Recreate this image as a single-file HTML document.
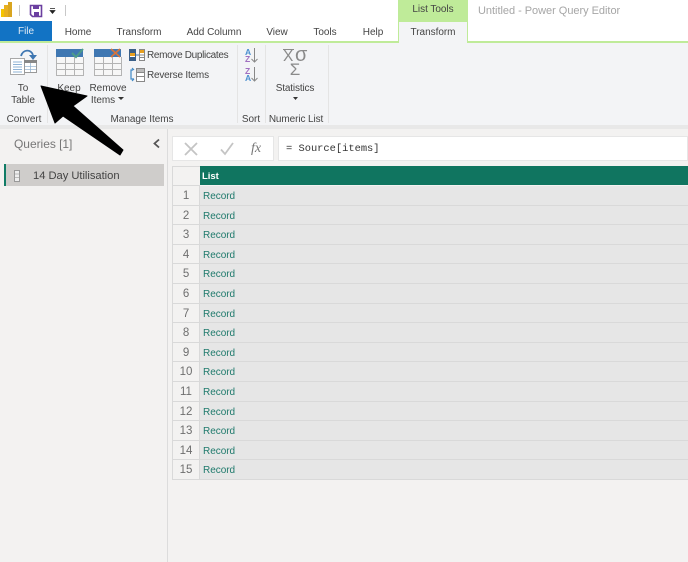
<!DOCTYPE html>
<html><head><meta charset="utf-8">
<style>
html,body{margin:0;padding:0}
body{width:688px;height:562px;position:relative;overflow:hidden;background:#f3f2f1;font-family:"Liberation Sans",sans-serif;font-size:10px;color:#444;letter-spacing:-.03px}
div{position:absolute;box-sizing:border-box}
.t{white-space:nowrap;line-height:12px;text-align:center;transform:translateX(-50%)}
.l{white-space:nowrap;line-height:12px}
.row{left:172px;width:516px;height:19.6px;border-bottom:1px solid #d9d9d9;background:#e6e6e6}
.n{left:0;top:0;width:28px;height:100%;background:#f3f2f1;border-left:1px solid #d9d9d9;border-right:1px solid #d9d9d9;text-align:center;font-size:11.5px;line-height:21px;color:#6e6e6e}
.r{left:31px;top:0;font-size:10px;line-height:21px;color:#1f7a6c;white-space:nowrap}
svg{position:absolute}
</style></head><body>
<div style="left:0;top:0;width:688px;height:42px;background:#fff"></div>
<div style="left:398px;top:0;width:70px;height:21px;background:#bfeb99"></div>
<div class="t" style="left:433px;top:4px;color:#444">List Tools</div>
<div class="l" style="left:478px;top:5px;font-size:11px;color:#a6a6a6">Untitled - Power Query Editor</div>
<div style="left:0;top:21px;width:52px;height:20px;background:#1273c4;color:#dfe9f3;text-align:center;line-height:22px;font-size:10px">File</div>
<div style="left:0;top:41px;width:688px;height:2px;background:#bfeb99"></div>
<div style="left:398px;top:21px;width:70px;height:22px;background:#f3f4f6;border:1px solid #bfeb99;border-bottom:0"></div>
<div class="t" style="left:78px;top:27px">Home</div>
<div class="t" style="left:139px;top:27px">Transform</div>
<div class="t" style="left:214px;top:27px">Add Column</div>
<div class="t" style="left:277px;top:27px">View</div>
<div class="t" style="left:325px;top:27px">Tools</div>
<div class="t" style="left:373px;top:27px">Help</div>
<div class="t" style="left:433px;top:27px">Transform</div>
<!-- ribbon -->
<div style="left:0;top:43px;width:688px;height:82px;background:#f3f4f6"></div>
<div style="left:0;top:125px;width:688px;height:4px;background:#e8e8e8"></div>
<div style="left:47px;top:45px;width:1px;height:78px;background:#e4e4e4"></div>
<div style="left:237px;top:45px;width:1px;height:78px;background:#e4e4e4"></div>
<div style="left:265px;top:45px;width:1px;height:78px;background:#e4e4e4"></div>
<div style="left:328px;top:45px;width:1px;height:78px;background:#e4e4e4"></div>
<div class="t" style="left:23px;top:83px">To</div>
<div class="t" style="left:23px;top:95px">Table</div>
<div class="t" style="left:24px;top:114px">Convert</div>
<div class="t" style="left:69px;top:83px">Keep</div>
<div class="t" style="left:108px;top:83px">Remove</div>
<div class="t" style="left:103px;top:95px">Items</div>
<div class="t" style="left:142px;top:114px">Manage Items</div>
<div class="l" style="left:147px;top:50px;letter-spacing:-.32px">Remove Duplicates</div>
<div class="l" style="left:147px;top:70px;letter-spacing:-.2px">Reverse Items</div>
<div class="t" style="left:251px;top:114px">Sort</div>
<div class="t" style="left:295px;top:83px;letter-spacing:-.15px">Statistics</div>
<div class="t" style="left:296px;top:114px;letter-spacing:-.1px">Numeric List</div>
<div class="l" style="left:283px;top:47px;font-size:15.500px;line-height:20px;color:#8a8a8a">X</div>
<div class="l" style="left:295px;top:45px;font-size:20px;line-height:20px;color:#8a8a8a">σ</div>
<div class="t" style="left:295px;top:60px;font-size:17px;line-height:20px;color:#8a8a8a">Σ</div>
<div class="l" style="left:245px;top:48px;font-size:8.500px;line-height:8px;color:#4a8fd0;font-weight:bold">A</div>
<div class="l" style="left:245px;top:55px;font-size:8.500px;line-height:8px;color:#a070c0;font-weight:bold">Z</div>
<div class="l" style="left:245px;top:67px;font-size:8.500px;line-height:8px;color:#a070c0;font-weight:bold">Z</div>
<div class="l" style="left:245px;top:74px;font-size:8.500px;line-height:8px;color:#4a8fd0;font-weight:bold">A</div>
<!-- panes -->
<div style="left:167px;top:129px;width:1px;height:433px;background:#dcdcdc"></div>
<div class="l" style="left:14px;top:136px;font-size:12px;line-height:16px;color:#777">Queries [1]</div>
<div style="left:4px;top:164px;width:160px;height:22px;background:#cfcdcb;border-left:2px solid #107c66"></div>
<div class="l" style="left:33px;top:169px;font-size:11.200px;line-height:15px;color:#444">14 Day Utilisation</div>
<!-- formula -->
<div style="left:172px;top:136px;width:102px;height:25px;background:#fff;border:1px solid #e6e6e6"></div>
<div style="left:278px;top:136px;width:410px;height:25px;background:#fff;border:1px solid #e6e6e6"></div>
<div class="l" style="left:286px;top:143px;font-family:'Liberation Mono',monospace;font-size:10.400px;color:#333;letter-spacing:0">= Source[items]</div>
<div class="l" style="left:251px;top:141px;font-family:'Liberation Serif',serif;font-style:italic;font-size:14px;line-height:15px;color:#777">fx</div>
<!-- table -->
<div style="left:172px;top:166px;width:28px;height:20px;background:#f3f2f1;border:1px solid #d9d9d9;border-right:0"></div>
<div style="left:200px;top:166px;width:488px;height:19px;background:#107560;color:#fff;font-weight:bold;font-size:9.500px;line-height:21px;padding-left:2px">List</div>
<div class="row" style="top:186px"><div class="n">1</div><div class="r">Record</div></div>
<div class="row" style="top:205.6px"><div class="n">2</div><div class="r">Record</div></div>
<div class="row" style="top:225.2px"><div class="n">3</div><div class="r">Record</div></div>
<div class="row" style="top:244.8px"><div class="n">4</div><div class="r">Record</div></div>
<div class="row" style="top:264.4px"><div class="n">5</div><div class="r">Record</div></div>
<div class="row" style="top:284px"><div class="n">6</div><div class="r">Record</div></div>
<div class="row" style="top:303.6px"><div class="n">7</div><div class="r">Record</div></div>
<div class="row" style="top:323.2px"><div class="n">8</div><div class="r">Record</div></div>
<div class="row" style="top:342.8px"><div class="n">9</div><div class="r">Record</div></div>
<div class="row" style="top:362.4px"><div class="n">10</div><div class="r">Record</div></div>
<div class="row" style="top:382px"><div class="n">11</div><div class="r">Record</div></div>
<div class="row" style="top:401.6px"><div class="n">12</div><div class="r">Record</div></div>
<div class="row" style="top:421.2px"><div class="n">13</div><div class="r">Record</div></div>
<div class="row" style="top:440.8px"><div class="n">14</div><div class="r">Record</div></div>
<div class="row" style="top:460.4px"><div class="n">15</div><div class="r">Record</div></div>
<!-- icons -->
<svg width="688" height="562" viewBox="0 0 688 562" style="left:0;top:0">
<!-- PBI logo -->
<rect x="1" y="9" width="4" height="8" fill="#f5c400"/><rect x="4" y="5" width="4" height="12" fill="#e8b020"/><rect x="8" y="2" width="4" height="15" fill="#d9a520"/>
<path d="M19.500 5V16M65.500 5V16" stroke="#c8c8c8"/>
<!-- save -->
<path d="M30.500 5.500H41.500V16.500H32.500L30.500 14.500Z" fill="#fff" stroke="#6b3fa0" stroke-width="1.600"/>
<rect x="33" y="5" width="6" height="4" fill="#6b3fa0"/><rect x="34" y="12" width="5" height="4" fill="#6b3fa0"/>
<path d="M50 8.500H55M50 10.500H55L52.500 13.500Z" fill="#222" stroke="#222" stroke-width=".7"/>
<!-- To Table -->
<path d="M21 56C23 49 31 49 33 55" fill="none" stroke="#3f77b2" stroke-width="1.800"/><path d="M29 55H37L33 60Z" fill="#3f77b2"/>
<rect x="10.500" y="58.500" width="14" height="16" fill="#fff" stroke="#a8a8a8"/>
<path d="M13 62H22M13 64.500H22M13 67H22M13 69.500H22M13 72H22" stroke="#8fb3d6"/>
<rect x="24.500" y="60.500" width="12" height="12" fill="#fff" stroke="#999"/>
<rect x="24" y="60" width="13" height="3" fill="#888"/>
<path d="M30.500 63V72M25 66.500H36M25 69.500H36" stroke="#9ab8d4" stroke-width=".8"/>
<!-- Keep -->
<rect x="56" y="49" width="27" height="8" fill="#3f77b2"/>
<path d="M56.500 57V75.500H83.500V57M56 63.500H84M56 69.500H84M65.500 57V75M74.500 57V75" fill="#f7f7f7" stroke="#b4b4b4"/>
<path d="M72 53L76 57L83 49" fill="none" stroke="#4d9c8a" stroke-width="2"/>
<!-- Remove -->
<rect x="94" y="49" width="27" height="8" fill="#3f77b2"/>
<path d="M94.500 57V75.500H121.500V57M94 63.500H122M94 69.500H122M103.500 57V75M112.500 57V75" fill="#f7f7f7" stroke="#b4b4b4"/>
<path d="M111 49L120 57M120 49L111 57" stroke="#d9743a" stroke-width="1.600"/>
<path d="M79 96H85L82 99Z M118 97H124L121 100Z" fill="#333"/>
<!-- Remove duplicates icon -->
<rect x="129.500" y="49.500" width="6" height="11" fill="#fff" stroke="#3a5f88"/><rect x="130" y="50" width="5" height="3" fill="#3a5f88"/><rect x="130" y="53" width="5" height="3" fill="#e8a020"/><rect x="130" y="57" width="5" height="3" fill="#3a5f88"/>
<path d="M136 55H139" stroke="#3f77b2"/>
<rect x="139.500" y="49.500" width="5" height="11" fill="#fff" stroke="#888"/><rect x="140" y="50" width="4" height="3" fill="#e8a020"/><path d="M140 55H144M140 57.500H144" stroke="#888"/>
<!-- Reverse items -->
<path d="M133 70H131V79H134M134 70L132 68M134 79L132 81" fill="none" stroke="#3f88c5" stroke-width="1.200"/>
<rect x="136.500" y="68.500" width="8" height="13" fill="#fff" stroke="#888"/><path d="M137 72.500H144M137 76.500H144" stroke="#888"/><rect x="137" y="69" width="7" height="3" fill="#bbb"/>
<!-- sort arrows -->
<path d="M254.500 48V62M251.500 59L254.500 62L257.500 59M254.500 67V81M251.500 78L254.500 81L257.500 78" fill="none" stroke="#888"/>
<path d="M293 97H298L295.500 100Z" fill="#333"/>
<path d="M283 49.500H294" stroke="#8a8a8a"/>
<!-- queries chevron -->
<path d="M159 139.500L154.500 143.500L159 147.500" fill="none" stroke="#555" stroke-width="1.800"/>
<!-- query icon -->
<rect x="14.500" y="170.500" width="5" height="11" fill="#eee" stroke="#999"/><path d="M15 174H19M15 177.500H19" stroke="#bbb"/>
<!-- formula icons -->
<path d="M185 143L197 155M197 143L185 155" stroke="#c4c4c4" stroke-width="1.800"/>
<path d="M221 149.500L225 154L233 143" fill="none" stroke="#c4c4c4" stroke-width="1.800"/>
<!-- arrow -->
<path d="M41 86L87 96L73 106L123 150L120 155L63 116L55 123Z" fill="#000" stroke="#000" stroke-width="1" stroke-linejoin="round"/>
</svg>
</body></html>
